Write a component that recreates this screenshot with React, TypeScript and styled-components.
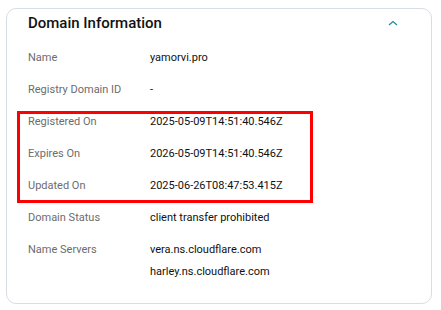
import React from 'react';
import styled, { createGlobalStyle } from 'styled-components';

const GlobalStyle = createGlobalStyle`
  body {
    margin: 0;
    background: #ffffff;
    font-family: Roboto, "Noto Sans", sans-serif;
  }
`;

const Page = styled.div`
  width: 441px;
  height: 310px;
  padding: 8px 9px 6px 6px;
  box-sizing: border-box;
`;

const Card = styled.section`
  position: relative;
  height: 100%;
  box-sizing: border-box;
  border: 1px solid #d8dde3;
  border-radius: 10px;
  padding: 1px 21px 0 21px;
`;

const Header = styled.div`
  display: flex;
  align-items: center;
  justify-content: space-between;
  height: 26px;
  margin-bottom: 14px;
`;

const Title = styled.h2`
  margin: 0;
  font-size: 15px;
  font-weight: 500;
  color: #111111;
`;

const Toggle = styled.button`
  display: flex;
  align-items: center;
  justify-content: center;
  width: 16px;
  height: 16px;
  margin-right: 9px;
  padding: 0;
  border: none;
  background: none;
  color: #1b8c9e;
`;

const List = styled.dl`
  margin: 0;
  display: grid;
  grid-template-columns: 122px 1fr;
`;

const Label = styled.dt`
  font-size: 11px;
  color: #6c6c6c;
  height: 32px;
  line-height: 16px;
`;

const Value = styled.dd`
  margin: 0;
  font-size: 11px;
  color: #111111;
  line-height: 16px;
  min-height: 32px;
  display: flex;
  flex-direction: column;
  gap: 6px;
`;

const Highlight = styled.div`
  position: absolute;
  left: 10px;
  top: 102px;
  width: 296px;
  height: 92px;
  box-sizing: border-box;
  border: 3px solid #ff0000;
  pointer-events: none;
`;

const rows: { label: string; values: string[] }[] = [
  { label: 'Name', values: ['yamorvi.pro'] },
  { label: 'Registry Domain ID', values: ['-'] },
  { label: 'Registered On', values: ['2025-05-09T14:51:40.546Z'] },
  { label: 'Expires On', values: ['2026-05-09T14:51:40.546Z'] },
  { label: 'Updated On', values: ['2025-06-26T08:47:53.415Z'] },
  { label: 'Domain Status', values: ['client transfer prohibited'] },
  { label: 'Name Servers', values: ['vera.ns.cloudflare.com', 'harley.ns.cloudflare.com'] },
];

const App: React.FC = () => {
  return (
    <>
      <GlobalStyle />
      <Page>
        <Card>
          <Header>
            <Title>Domain Information</Title>
            <Toggle aria-label="Collapse">
              <svg width="10" height="6" viewBox="0 0 10 6" fill="none">
                <path d="M1 5 L5 1.5 L9 5" stroke="currentColor" strokeWidth="1.2" />
              </svg>
            </Toggle>
          </Header>
          <List>
            {rows.map(row => (
              <React.Fragment key={row.label}>
                <Label>{row.label}</Label>
                <Value>
                  {row.values.map(v => (
                    <span key={v}>{v}</span>
                  ))}
                </Value>
              </React.Fragment>
            ))}
          </List>
          <Highlight />
        </Card>
      </Page>
    </>
  );
};

export default App;
